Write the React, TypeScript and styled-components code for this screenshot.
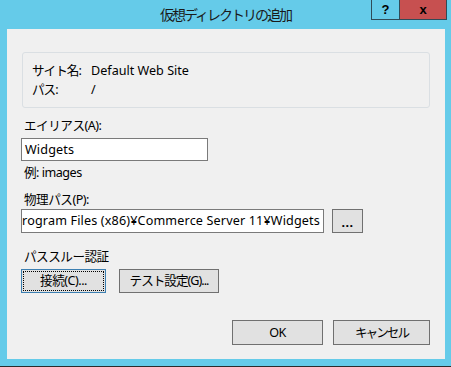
import React from 'react';
import styled, { createGlobalStyle } from 'styled-components';

const GlobalStyle = createGlobalStyle`
  html, body {
    margin: 0;
    padding: 0;
    background: #65cbe9;
  }
  body {
    font-family: "Noto Sans", "Noto Sans CJK JP", sans-serif;
    font-size: 12.6px;
    color: #000;
  }
`;

const Window = styled.div`
  width: 451px;
  height: 367px;
  box-sizing: border-box;
  background: #65cbe9;
  border-bottom: 1px solid #2b2b2b;
  display: flex;
  flex-direction: column;
`;

const TitleBar = styled.div`
  height: 29px;
  display: grid;
  grid-template-columns: 1fr auto 1fr;
  align-items: start;
`;

const Title = styled.div`
  grid-column: 2;
  padding-top: 5px;
  font-family: "Noto Sans CJK JP", sans-serif;
  font-size: 14px;
  letter-spacing: -2px;
  line-height: 18px;
  color: #1a1a1a;
`;

const Controls = styled.div`
  grid-column: 3;
  justify-self: end;
  margin-right: 4px;
  display: flex;
  height: 20px;
  box-sizing: border-box;
  border: 1px solid #2f4b58;
  border-top: none;
`;

const ControlButton = styled.div<{ $close?: boolean }>`
  width: ${(p) => (p.$close ? '46px' : '27px')};
  background: ${(p) => (p.$close ? '#c75050' : '#65cbe9')};
  border-left: ${(p) => (p.$close ? '1px solid #2f4b58' : 'none')};
  display: flex;
  align-items: center;
  justify-content: center;
  font-family: "Liberation Sans", sans-serif;
  font-weight: bold;
  font-size: 13px;
  color: #000;
`;

const Client = styled.div`
  margin: 0 6px 0 7px;
  height: 330px;
  background: #f0f0f0;
  box-sizing: border-box;
  padding: 23px 15px 0 14px;
  display: flex;
  flex-direction: column;
`;

const GroupBox = styled.div`
  margin-left: 1px;
  border: 1px solid #dadfe3;
  border-radius: 3px;
  padding: 8px 9px;
  display: grid;
  grid-template-columns: 59px 1fr;
  line-height: 19px;
`;

const Key = styled.span`
  letter-spacing: -1px;
`;

const Label = styled.div<{ $top: number }>`
  margin-top: ${(p) => p.$top}px;
  margin-left: 3px;
  line-height: 16px;
  white-space: nowrap;
  letter-spacing: -0.5px;
`;

const TextBox = styled.div<{ $width: number; $start?: boolean }>`
  width: ${(p) => p.$width}px;
  height: 24px;
  box-sizing: border-box;
  border: 1px solid #7a7a7a;
  background: #fff;
  padding: 0 3px;
  display: flex;
  align-items: center;
  justify-content: ${(p) => (p.$start ? 'flex-start' : 'flex-end')};
  overflow: hidden;
  white-space: nowrap;
  line-height: 20px;
  letter-spacing: 0.15px;
`;

const Row = styled.div<{ $top: number; $gap: number; $end?: boolean }>`
  margin-top: ${(p) => p.$top}px;
  display: flex;
  gap: ${(p) => p.$gap}px;
  justify-content: ${(p) => (p.$end ? 'flex-end' : 'flex-start')};
`;

const Button = styled.div<{ $width: number; $height?: number; $focused?: boolean; $ls?: number }>`
  position: relative;
  width: ${(p) => p.$width}px;
  height: ${(p) => p.$height ?? 24}px;
  box-sizing: border-box;
  border: 1px solid ${(p) => (p.$focused ? '#3c7fb1' : '#707070')};
  background: #e1e1e1;
  display: flex;
  align-items: center;
  justify-content: center;
  white-space: nowrap;
  line-height: 20px;
  letter-spacing: ${(p) => p.$ls ?? -0.5}px;

  &::after {
    content: '';
    display: ${(p) => (p.$focused ? 'block' : 'none')};
    position: absolute;
    inset: 1px;
    border: 1px dotted #000;
  }
`;

const App: React.FC = () => {
  return (
    <>
      <GlobalStyle />
      <Window>
        <TitleBar>
          <Title>仮想ディレクトリの追加</Title>
          <Controls>
            <ControlButton>?</ControlButton>
            <ControlButton $close>x</ControlButton>
          </Controls>
        </TitleBar>
        <Client>
          <GroupBox>
            <Key>サイト名:</Key>
            <span>Default Web Site</span>
            <Key>パス:</Key>
            <span>/</span>
          </GroupBox>

          <Label $top={10}>エイリアス(A):</Label>
          <Row $top={4} $gap={0}>
            <TextBox $width={187} $start style={{ height: 23 }}>
              Widgets
            </TextBox>
          </Row>
          <Label $top={4}>例: images</Label>

          <Label $top={11}>物理パス(P):</Label>
          <Row $top={1} $gap={8}>
            <TextBox $width={303}>C:¥Program Files (x86)¥Commerce Server 11¥Widgets</TextBox>
            <Button $width={31} $ls={0.5} style={{ fontWeight: 'bold', paddingTop: 3 }}>...</Button>
          </Row>

          <Label $top={16}>パススルー認証</Label>
          <Row $top={4} $gap={13}>
            <Button $width={85} $focused>接続(C)...</Button>
            <Button $width={100} $ls={-1}>テスト設定(G)...</Button>
          </Row>

          <Row $top={27} $gap={10} $end>
            <Button $width={91} $height={25}>OK</Button>
            <Button $width={97} $height={25} $ls={-2}>キャンセル</Button>
          </Row>
        </Client>
      </Window>
    </>
  );
};

export default App;
